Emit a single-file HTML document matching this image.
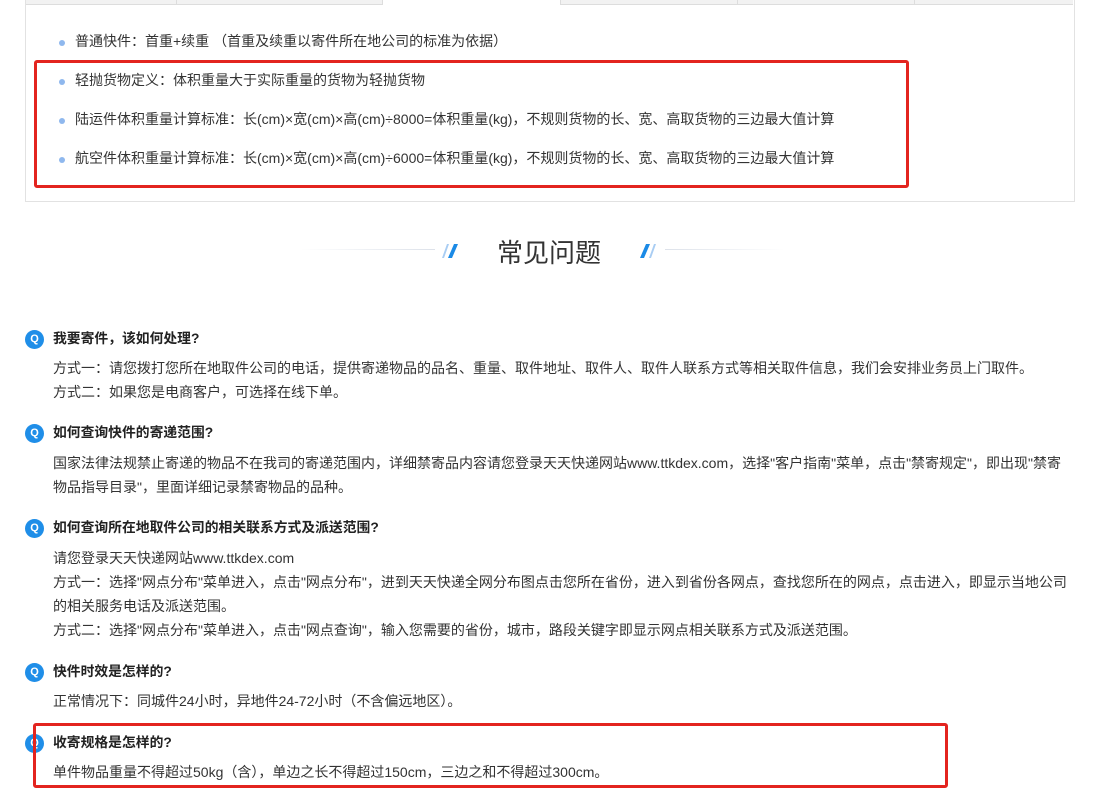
<!DOCTYPE html>
<html><head><meta charset="utf-8"><style>
body{margin:0;width:1102px;height:791px;background:#fff;position:relative;overflow:hidden;font-family:"Liberation Sans","Noto Sans CJK SC",sans-serif;color:#333;font-size:14px}
.a{position:absolute;white-space:nowrap;line-height:16px}
.dot{position:absolute;width:6px;height:6px;border-radius:50%;background:#8fb8ee}
.q{position:absolute;left:25px;width:19px;height:19px;border-radius:50%;background:#1f8ee8;color:#fff;font-size:11px;font-weight:bold;text-align:center;line-height:19px}
.qt{position:absolute;left:53px;font-weight:bold;font-size:13.8px;color:#222;white-space:nowrap;line-height:16px}
.red{position:absolute;border:3px solid #e3241f;border-radius:3px;box-sizing:border-box}
</style></head><body>
<div style="position:absolute;left:25px;top:0;width:1050px;height:202px;border:1px solid #e2e2e2;border-top:none;box-sizing:border-box"></div>
<div style="position:absolute;left:26px;top:0;width:356px;height:4px;background:#f2f2f2;border-bottom:1px solid #ddd"></div>
<div style="position:absolute;left:176px;top:0;width:1px;height:5px;background:#ddd"></div>
<div style="position:absolute;left:560px;top:0;width:513px;height:4px;background:#f2f2f2;border-bottom:1px solid #ddd"></div>
<div style="position:absolute;left:737px;top:0;width:1px;height:5px;background:#ddd"></div>
<div style="position:absolute;left:914px;top:0;width:1px;height:5px;background:#ddd"></div>
<div style="position:absolute;left:382px;top:0;width:1px;height:5px;background:#ddd"></div>
<div style="position:absolute;left:560px;top:0;width:1px;height:5px;background:#ddd"></div>

<div class="dot" style="left:59px;top:40px"></div><div class="a" style="left:75px;top:33px">普通快件：首重+续重 （首重及续重以寄件所在地公司的标准为依据）</div>
<div class="dot" style="left:59px;top:79px"></div><div class="a" style="left:75px;top:72px">轻抛货物定义：体积重量大于实际重量的货物为轻抛货物</div>
<div class="dot" style="left:59px;top:118px"></div><div class="a" style="left:75px;top:111px">陆运件体积重量计算标准：长(cm)×宽(cm)×高(cm)÷8000=体积重量(kg)，不规则货物的长、宽、高取货物的三边最大值计算</div>
<div class="dot" style="left:59px;top:157px"></div><div class="a" style="left:75px;top:150px">航空件体积重量计算标准：长(cm)×宽(cm)×高(cm)÷6000=体积重量(kg)，不规则货物的长、宽、高取货物的三边最大值计算</div>
<div class="red" style="left:34px;top:60px;width:875px;height:128px"></div>

<div style="position:absolute;left:300px;top:249px;width:135px;height:1px;background:linear-gradient(90deg,#fff,#dde2ea)"></div>
<div style="position:absolute;left:665px;top:249px;width:120px;height:1px;background:linear-gradient(90deg,#dde2ea,#fff)"></div>
<svg style="position:absolute;left:436px;top:241px" width="26" height="20"><path d="M6 17 L11 3 L13 3 L8 17Z" fill="#a9cdf3"/><path d="M12 17 L18 3 L22 3 L16 17Z" fill="#1b8ae6"/></svg>
<svg style="position:absolute;left:637px;top:241px" width="26" height="20"><path d="M3 17 L9 3 L13 3 L7 17Z" fill="#1b8ae6"/><path d="M12 17 L17 3 L19 3 L14 17Z" fill="#a9cdf3"/></svg>
<div class="a" style="left:497px;top:238px;font-size:26px;line-height:30px;color:#333">常见问题</div>

<div class="q" style="top:330px">Q</div><div class="qt" style="top:331px">我要寄件，该如何处理?</div>
<div class="a" style="left:53px;top:360px">方式一：请您拨打您所在地取件公司的电话，提供寄递物品的品名、重量、取件地址、取件人、取件人联系方式等相关取件信息，我们会安排业务员上门取件。</div>
<div class="a" style="left:53px;top:384px">方式二：如果您是电商客户，可选择在线下单。</div>

<div class="q" style="top:424px">Q</div><div class="qt" style="top:425px">如何查询快件的寄递范围?</div>
<div class="a" style="left:53px;top:455px">国家法律法规禁止寄递的物品不在我司的寄递范围内，详细禁寄品内容请您登录天天快递网站www.ttkdex.com，选择"客户指南"菜单，点击"禁寄规定"，即出现"禁寄</div>
<div class="a" style="left:53px;top:479px">物品指导目录"，里面详细记录禁寄物品的品种。</div>

<div class="q" style="top:519px">Q</div><div class="qt" style="top:520px">如何查询所在地取件公司的相关联系方式及派送范围?</div>
<div class="a" style="left:53px;top:550px">请您登录天天快递网站www.ttkdex.com</div>
<div class="a" style="left:53px;top:574px">方式一：选择"网点分布"菜单进入，点击"网点分布"，进到天天快递全网分布图点击您所在省份，进入到省份各网点，查找您所在的网点，点击进入，即显示当地公司</div>
<div class="a" style="left:53px;top:598px">的相关服务电话及派送范围。</div>
<div class="a" style="left:53px;top:622px">方式二：选择"网点分布"菜单进入，点击"网点查询"，输入您需要的省份，城市，路段关键字即显示网点相关联系方式及派送范围。</div>

<div class="q" style="top:663px">Q</div><div class="qt" style="top:664px">快件时效是怎样的?</div>
<div class="a" style="left:53px;top:693px">正常情况下：同城件24小时，异地件24-72小时（不含偏远地区）。</div>

<div class="q" style="top:734px">Q</div><div class="qt" style="top:735px">收寄规格是怎样的?</div>
<div class="a" style="left:53px;top:764px">单件物品重量不得超过50kg（含），单边之长不得超过150cm，三边之和不得超过300cm。</div>
<div class="red" style="left:33px;top:723px;width:915px;height:65px"></div>
</body></html>
